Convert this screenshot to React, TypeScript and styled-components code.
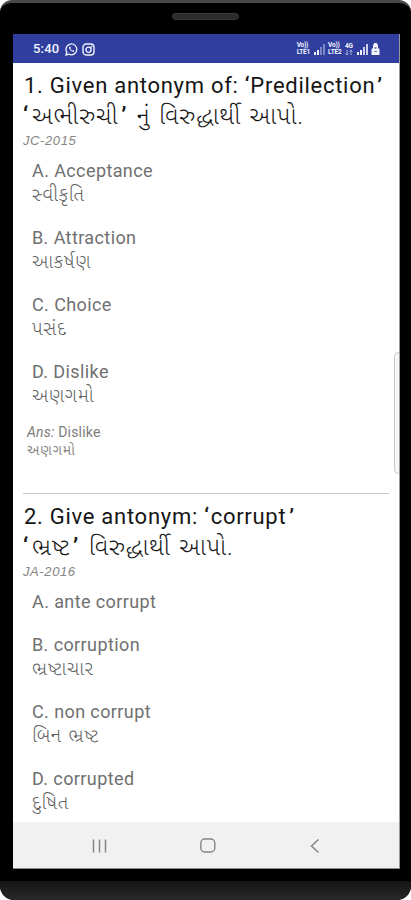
import React from 'react';
import styled, { createGlobalStyle } from 'styled-components';

const GlobalStyle = createGlobalStyle`
  * { box-sizing: border-box; }
  body { margin: 0; background: #fff; overflow: hidden; }
`;

const Device = styled.div`
  width: 411px;
  height: 900px;
  display: flex;
  flex-direction: column;
  background: #000;
  border-top: 3px solid #484848;
  border-radius: 12px 12px 14px 14px;
  overflow: hidden;
  font-family: Roboto, 'Noto Sans Gujarati', 'Lohit Gujarati', sans-serif;
`;

const Bezel = styled.header`
  height: 31px;
  flex: none;
  display: flex;
  justify-content: center;
  padding-top: 10px;
`;

const Speaker = styled.div`
  width: 67px;
  height: 7px;
  border-radius: 4px;
  background: #2c2c2c;
  border: 1px solid #393939;
`;

const Screen = styled.main`
  position: relative;
  width: 387px;
  height: 835px;
  flex: none;
  margin-left: 13px;
  display: flex;
  flex-direction: column;
  background: #fff;
  border-right: 1px solid #999;
  border-bottom: 1px solid #888;
`;

const StatusBar = styled.div`
  height: 29px;
  flex: none;
  display: flex;
  align-items: center;
  justify-content: space-between;
  padding: 1px 19px 0 20px;
  background: #303f9f;
  color: #f3f4ff;
`;

const StatusGroup = styled.div<{ $gap: number }>`
  display: flex;
  align-items: center;
  gap: ${(p) => p.$gap}px;
`;

const Clock = styled.span`
  font-size: 13px;
  line-height: 14px;
  font-weight: 500;
  width: 28px;
  letter-spacing: 0.2px;
`;

const Network = styled.span`
  display: flex;
  flex-direction: column;
  font-size: 6.5px;
  line-height: 7px;
  font-weight: 700;
  letter-spacing: -0.2px;
`;

const Content = styled.div`
  flex: 1;
  min-height: 0;
  overflow: hidden;
`;

const QuestionBlock = styled.section<{ $height: number }>`
  height: ${(p) => p.$height}px;
  padding: 8px 0 0 10px;
`;

const Title = styled.h2`
  margin: 0;
  height: 30px;
  padding-left: 1px;
  font-size: 22px;
  line-height: 30px;
  font-weight: 400;
  color: #151515;
  white-space: nowrap;
  letter-spacing: 0.72px;
`;

const Translation = styled(Title)`
  padding-left: 0;
  font-size: 24px;
  font-weight: 300;
  letter-spacing: 0.8px;
  word-spacing: 2px;
`;

const Quote = styled.span<{ $before?: number; $after?: number }>`
  font-weight: 500;
  padding-left: ${(p) => p.$before ?? 0}px;
  padding-right: ${(p) => p.$after ?? 0}px;
`;

const Source = styled.div`
  height: 20px;
  font: italic 400 13px/20px 'Liberation Sans', sans-serif;
  letter-spacing: 0.6px;
  color: #858585;
`;

const Options = styled.div`
  display: flex;
  flex-direction: column;
  gap: 19px;
  padding: 8px 0 0 9px;
`;

const Line = styled.div`
  height: 24px;
  font-size: 18px;
  line-height: 24px;
  color: #707070;
  white-space: nowrap;
  letter-spacing: 0.4px;
`;

const LineTranslation = styled(Line)`
  font-size: 19px;
  line-height: 24px;
  font-weight: 300;
  color: #606060;
  letter-spacing: 0.75px;
  word-spacing: 1.5px;
`;

const Answer = styled.div`
  padding: 15px 0 0 4px;
  font-size: 14px;
  line-height: 18px;
  color: #7c7c7c;
  letter-spacing: 0.2px;
`;

const AnswerTranslation = styled.div`
  letter-spacing: 0.95px;
  color: #8a8a8a;
`;

const Rule = styled.hr`
  margin: 0 10px 0 10px;
  border: 0;
  height: 1px;
  background: #c8c8c8;
`;

const EdgeHandle = styled.div`
  position: absolute;
  right: 0;
  top: 318px;
  width: 5px;
  height: 122px;
  border: 1px solid #c9c9c9;
  border-right: 0;
  border-radius: 5px 0 0 5px;
  background: #f7f7f7;
`;

const NavBar = styled.nav`
  height: 46px;
  flex: none;
  display: flex;
  justify-content: space-between;
  align-items: center;
  padding: 1px 78px 0 76px;
  background: #f1f1f1;
`;

const Chin = styled.footer`
  margin-top: 12px;
  flex: 1;
  border-radius: 0 0 14px 14px;
  background: linear-gradient(#151515, #292929);
`;

const WhatsApp = () => (
  <svg width="13" height="13" viewBox="0 0 13 13" fill="none" stroke="currentColor">
    <path d="M1 12l.8-2.8A5.4 5.4 0 1 1 4 11.2z" strokeWidth="1.3" />
    <path d="M4.5 3.7c-.7.5-.7 1.4.4 2.9 1.1 1.6 2.5 2.4 3.5 2.2.8-.2 1-.8.8-1.2L8 7l-.7.7C6.5 7.4 5.8 6.6 5.4 5.8L6 5.2 5.4 3.8z" fill="currentColor" stroke="none" />
  </svg>
);

const Instagram = () => (
  <svg width="13" height="13" viewBox="0 0 13 13" fill="none" stroke="currentColor">
    <rect x="1" y="1" width="11" height="11" rx="3.2" strokeWidth="1.4" />
    <circle cx="6.5" cy="6.7" r="2.6" strokeWidth="1.3" />
    <circle cx="9.5" cy="3.6" r=".9" fill="currentColor" stroke="none" />
  </svg>
);

const Signal = ({ faded = false }: { faded?: boolean }) => (
  <svg width="11" height="11" viewBox="0 0 11 11" fill="currentColor">
    <path d="M0 8h2v3H0zM3 6h2v5H3z" />
    <path d="M6 3h2v8H6zM9 0h2v11H9z" opacity={faded ? 0.4 : 0.8} />
  </svg>
);

const Transfer = () => (
  <svg width="8" height="6" viewBox="0 0 8 6" fill="none" stroke="currentColor" opacity=".65">
    <path d="M2 0v5M.5 3.5L2 5l1.5-1.5M6 5V0M4.5 1.5L6 0l1.5 1.5" />
  </svg>
);

const Battery = () => (
  <svg width="9" height="12" viewBox="0 0 9 12" fill="currentColor">
    <path d="M3 0h3v1.5h1V5l1.5 1v6H.5V6L2 5V1.5h1z" />
    <path d="M3.5 4h2v2h-2zM3 8h3v1H3z" fill="#7e88c6" />
  </svg>
);

const Recents = () => (
  <svg width="20" height="16" viewBox="0 0 20 16" stroke="#858585" strokeWidth="1.5">
    <path d="M4.5 1.5v13M10.5 1.5v13M16.5 1.5v13" />
  </svg>
);

const Home = () => (
  <svg width="18" height="16" viewBox="0 0 18 16" fill="none" stroke="#858585" strokeWidth="1.4">
    <rect x="0.8" y="1" width="14" height="13" rx="4" />
  </svg>
);

const Back = () => (
  <svg width="12" height="16" viewBox="0 0 12 16" fill="none" stroke="#858585" strokeWidth="1.5">
    <path d="M9.5 1.5L2.5 8l7 6.5" />
  </svg>
);

type Option = { en: string; gu?: string };

const OptionList = ({ items }: { items: Option[] }) => (
  <Options>
    {items.map((o) => (
      <div key={o.en}>
        <Line>{o.en}</Line>
        {o.gu && <LineTranslation>{o.gu}</LineTranslation>}
      </div>
    ))}
  </Options>
);

export default function App() {
  return (
    <>
      <GlobalStyle />
      <Device>
        <Bezel><Speaker /></Bezel>
        <Screen>
          <StatusBar>
            <StatusGroup $gap={4}>
              <Clock>5:40</Clock>
              <WhatsApp />
              <Instagram />
            </StatusGroup>
            <StatusGroup $gap={3.5}>
              <Network><span>Vo))</span><span>LTE1</span></Network>
              <Signal faded />
              <Network><span>Vo))</span><span>LTE2</span></Network>
              <Network><span>4G</span><Transfer /></Network>
              <Signal />
              <Battery />
            </StatusGroup>
          </StatusBar>
          <Content>
            <QuestionBlock $height={430}>
              <Title>
                1. Given antonym of: <Quote>‘</Quote>Predilection<Quote $before={2}>’</Quote>
              </Title>
              <Translation>
                <Quote $after={3}>‘</Quote>અભીરુચી<Quote $before={3} $after={1}>’</Quote> નું વિરુદ્ધાર્થી આપો.
              </Translation>
              <Source>JC-2015</Source>
              <OptionList
                items={[
                  { en: 'A. Acceptance', gu: 'સ્વીકૃતિ' },
                  { en: 'B. Attraction', gu: 'આકર્ષણ' },
                  { en: 'C. Choice', gu: 'પસંદ' },
                  { en: 'D. Dislike', gu: 'અણગમો' },
                ]}
              />
              <Answer>
                <div><i>Ans:</i> Dislike</div>
                <AnswerTranslation>અણગમો</AnswerTranslation>
              </Answer>
            </QuestionBlock>
            <Rule />
            <QuestionBlock $height={340}>
              <Title>
                2. Give antonym: <Quote $after={1}>‘</Quote>corrupt<Quote $before={3}>’</Quote>
              </Title>
              <Translation>
                <Quote $after={3}>‘</Quote>ભ્રષ્ટ<Quote $before={3} $after={1}>’</Quote> વિરુદ્ધાર્થી આપો.
              </Translation>
              <Source>JA-2016</Source>
              <OptionList
                items={[
                  { en: 'A. ante corrupt' },
                  { en: 'B. corruption', gu: 'ભ્રષ્ટાચાર' },
                  { en: 'C. non corrupt', gu: 'બિન ભ્રષ્ટ' },
                  { en: 'D. corrupted', gu: 'દુષિત' },
                ]}
              />
            </QuestionBlock>
          </Content>
          <NavBar><Recents /><Home /><Back /></NavBar>
          <EdgeHandle />
        </Screen>
        <Chin />
      </Device>
    </>
  );
}
